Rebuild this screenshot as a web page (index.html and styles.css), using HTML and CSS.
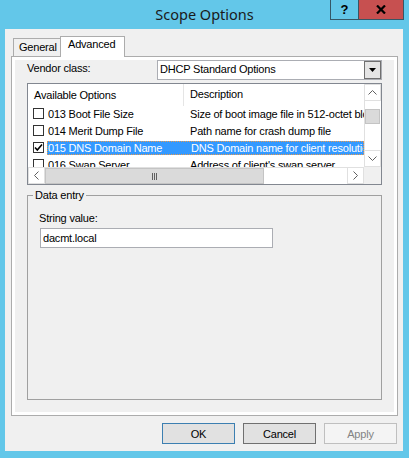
FILE: index.html
```html
<!DOCTYPE html>
<html>
<head>
<meta charset="utf-8">
<link rel="stylesheet" href="styles.css">
</head>
<body>
<div class="window">
  <div class="titlebar">
    <div class="title">Scope Options</div>
    <div class="caption">
      <div class="cbtn help">?</div>
      <div class="cbtn close">
        <svg width="10" height="9" viewBox="0 0 10 9"><path d="M1 0.5 L9 8.5 M9 0.5 L1 8.5" stroke="#000" stroke-width="2.2" fill="none"/></svg>
      </div>
    </div>
  </div>
  <div class="client">
    <div class="tabs">
      <div class="tabstrip">
        <div class="tab general">General</div>
        <div class="tab active">Advanced</div>
      </div>
      <div class="pane">
        <div class="page">
          <div class="vendor-row">
            <div class="label">Vendor class:</div>
            <div class="combo">
              <div class="combo-text">DHCP Standard Options</div>
              <div class="combo-btn">
                <svg width="7" height="4" viewBox="0 0 7 4"><path d="M0 0 H7 L3.5 4 Z" fill="#000"/></svg>
              </div>
            </div>
          </div>
          <div class="list">
            <div class="list-body">
              <div class="lv-header">
                <div class="col1 hcell">Available Options</div>
                <div class="col2 hcell">Description</div>
              </div>
              <div class="lv-row">
                <div class="col1"><span class="chk"></span><span class="name">013 Boot File Size</span></div>
                <div class="col2">Size of boot image file in 512-octet blocks</div>
              </div>
              <div class="lv-row">
                <div class="col1"><span class="chk"></span><span class="name">014 Merit Dump File</span></div>
                <div class="col2">Path name for crash dump file</div>
              </div>
              <div class="lv-row selected">
                <span class="chk checked"><svg width="9" height="9" viewBox="0 0 9 9"><path d="M1 4.5 L3.3 7 L8 1.5" stroke="#000" stroke-width="1.6" fill="none"/></svg></span>
                <div class="sel-band"><span class="name">015 DNS Domain Name</span><span class="desc">DNS Domain name for client resolutions</span></div>
              </div>
              <div class="lv-row">
                <div class="col1"><span class="chk"></span><span class="name">016 Swap Server</span></div>
                <div class="col2">Address of client's swap server</div>
              </div>
            </div>
            <div class="vscroll">
              <div class="sb-btn up"><svg width="9" height="5" viewBox="0 0 9 5"><path d="M0.5 4.5 L4.5 0.5 L8.5 4.5" stroke="#606060" fill="none"/></svg></div>
              <div class="vtrack"><div class="vthumb"></div></div>
              <div class="sb-btn down"><svg width="9" height="5" viewBox="0 0 9 5"><path d="M0.5 0.5 L4.5 4.5 L8.5 0.5" stroke="#606060" fill="none"/></svg></div>
            </div>
            <div class="hscroll">
              <div class="sb-btn left"><svg width="5" height="9" viewBox="0 0 5 9"><path d="M4.5 0.5 L0.5 4.5 L4.5 8.5" stroke="#606060" fill="none"/></svg></div>
              <div class="htrack"><div class="hthumb"><span class="grip"></span><span class="grip"></span><span class="grip"></span></div></div>
              <div class="sb-btn right"><svg width="5" height="9" viewBox="0 0 5 9"><path d="M0.5 0.5 L4.5 4.5 L0.5 8.5" stroke="#606060" fill="none"/></svg></div>
            </div>
            <div class="corner"></div>
          </div>
          <fieldset class="group">
            <legend>Data entry</legend>
            <div class="field-label">String value:</div>
            <div class="input">dacmt.local</div>
          </fieldset>
        </div>
      </div>
    </div>
    <div class="buttons">
      <div class="btn default">OK</div>
      <div class="btn">Cancel</div>
      <div class="btn disabled">Apply</div>
    </div>
  </div>
</div>
</body>
</html>
```

FILE: styles.css
```css
* { box-sizing: border-box; }
html, body { margin: 0; padding: 0; }
body {
  width: 409px;
  height: 458px;
  overflow: hidden;
  background: #63c7e9;
  font-family: "Liberation Sans", Arial, sans-serif;
  font-size: 11px;
  letter-spacing: -0.2px;
  color: #000;
}
.window { display: flex; flex-direction: column; height: 458px; }

.titlebar { height: 29px; display: grid; }
.titlebar > * { grid-area: 1 / 1; }
.title {
  justify-self: center;
  margin-top: 4px;
  font-family: "Noto Sans", sans-serif;
  font-size: 14.5px;
  letter-spacing: 0;
  color: #1a1a1a;
  line-height: 20px;
}
.caption { justify-self: end; display: flex; margin-right: 5px; height: 20px; }
.cbtn {
  height: 20px;
  border: 1px solid #355766;
  border-top: none;
  display: flex;
  align-items: center;
  justify-content: center;
}
.help { width: 29px; font-weight: bold; font-size: 13px; letter-spacing: 0; }
.close { width: 45px; border-left: none; background: #c75050; }

.client {
  margin: 0 6px 0 5px;
  height: 422px;
  background: #f0f0f0;
  padding: 7px 5px 0 6px;
  display: flex;
  flex-direction: column;
}

.tabstrip { display: flex; align-items: flex-end; height: 20px; padding-left: 2px; }
.tab {
  height: 18px;
  border: 1px solid #acacac;
  border-bottom: none;
  background: #f0f0f0;
  line-height: 13px;
  padding: 2px 0 0 5px;
}
.tab.general { width: 47px; border-right: none; }
.tab.active {
  width: 65px;
  height: 21px;
  margin-bottom: -1px;
  position: relative;
  z-index: 1;
  background: #fff;
  padding: 1px 0 0 7px;
}
.pane {
  height: 360px;
  border: 1px solid #acacac;
  background: #fff;
  padding: 3px;
}
.page {
  height: 100%;
  background: #f0f0f0;
  padding: 0 12px 0 12px;
  display: flex;
  flex-direction: column;
}

.vendor-row { display: flex; height: 20px; }
.label { padding-top: 2px; line-height: 13px; }
.combo {
  margin-left: auto;
  width: 225px;
  height: 20px;
  border: 1px solid #abadb3;
  background: #fff;
  display: flex;
}
.combo-text { padding-left: 2px; line-height: 17px; flex: 1; }
.combo-btn {
  width: 17px;
  height: 18px;
  border: 1px solid #707070;
  background: #e5e5e5;
  display: flex;
  align-items: center;
  justify-content: center;
}

.list {
  margin-top: 3px;
  height: 102px;
  border: 1px solid #828790;
  background: #fff;
  display: grid;
  grid-template-columns: 1fr 17px;
  grid-template-rows: 1fr 17px;
}
.list-body { overflow: hidden; white-space: nowrap; }
.lv-header { display: flex; height: 22px; line-height: 21px; }
.hcell { padding-left: 6px; }
.col1 { width: 156px; flex: none; display: flex; align-items: center; }
.hcell.col1 { border-right: 1px solid #e5e5e5; }
.col2 { padding-left: 6px; }
.lv-row { display: flex; height: 17px; line-height: 15px; }
.lv-row .col2 { padding-top: 1px; }
.lv-row .col1 { align-items: flex-start; }
.chk {
  width: 11px;
  height: 11px;
  border: 1px solid #333;
  background: #fff;
  margin: 2px 4px 0 5px;
  flex: none;
  display: flex;
  align-items: center;
  justify-content: center;
}
.name { padding-top: 1px; }
.lv-row.selected .chk { margin-right: 3px; }
.sel-band {
  display: flex;
  flex: 1;
  min-width: 0;
  margin-top: 1px;
  height: 14px;
  line-height: 12px;
  background: #3399ff;
  color: #fff;
  border: 1px dotted #e89a4c;
  overflow: hidden;
}
.sel-band .name { width: 137px; flex: none; padding-top: 0; }
.sel-band .desc { padding-left: 6px; }

.vscroll { display: flex; flex-direction: column; background: #fff; border-left: 1px solid #e0e0e0; }
.sb-btn {
  flex: none;
  width: 17px;
  height: 17px;
  border: 1px solid #e0e0e0;
  background: #fff;
  display: flex;
  align-items: center;
  justify-content: center;
}
.vscroll .sb-btn { width: 16px; border-left: none; }
.vtrack { flex: 1; padding-top: 8px; }
.vthumb { height: 15px; background: #dadada; border: 1px solid #c4c4c4; margin: 0 1px 0 0; }
.hscroll { display: flex; background: #fff; border-top: 1px solid #e0e0e0; }
.hscroll .sb-btn { height: 16px; border-top: none; }
.htrack { flex: 1; display: flex; }
.hthumb {
  width: 219px;
  height: 16px;
  background: #dadada;
  border: 1px solid #c4c4c4;
  display: flex;
  align-items: center;
  justify-content: center;
  gap: 1px;
}
.grip { width: 1px; height: 7px; background: #606060; }
.corner { background: #f0f0f0; }

.group {
  margin: 4px 0 0;
  height: 211px;
  border: 1px solid #a0a0a0;
  padding: 0 13px 0 5px;
}
.group legend { padding: 0 2px; line-height: 13px; }
.field-label { margin: 10px 0 0 6px; line-height: 13px; }
.input {
  margin: 3px 0 0 7px;
  width: 233px;
  height: 20px;
  border: 1px solid #abadb3;
  background: #fff;
  padding-left: 2px;
  line-height: 18px;
}

.buttons { display: flex; justify-content: flex-end; gap: 8px; margin-top: 7px; padding-right: 1px; }
.btn {
  width: 73px;
  height: 21px;
  border: 1px solid #707070;
  background: #e1e1e1;
  display: flex;
  align-items: center;
  justify-content: center;
}
.btn.default { border-color: #3c7fb1; }
.btn.disabled { border-color: #bfbfbf; background: #f4f4f4; color: #838383; }
```
